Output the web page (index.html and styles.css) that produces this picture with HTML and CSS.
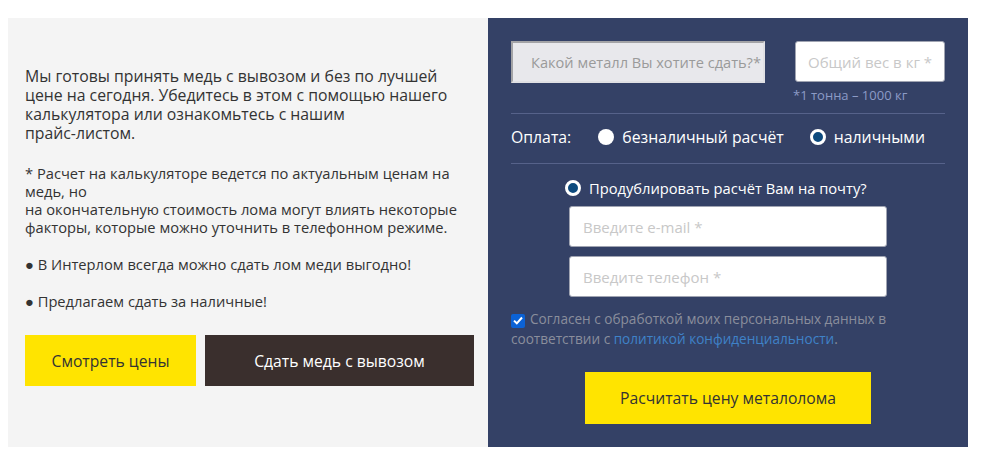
FILE: index.html
```html
<!DOCTYPE html>
<html lang="ru">
<head>
    <meta charset="UTF-8">
    <meta name="viewport" content="width=device-width, initial-scale=1.0">
    <title>Сдать медь</title>
    <link rel="stylesheet" href="styles.css">
</head>
<body>
    <div class="calc-section">
        <div class="info-panel">
            <p class="lead">Мы готовы принять медь с вывозом и без по лучшей<br>цене на сегодня. Убедитесь в этом с помощью нашего<br>калькулятора или ознакомьтесь с нашим<br>прайс-листом.</p>
            <p class="note">* Расчет на калькуляторе ведется по актуальным ценам на<br>медь, но<br>на окончательную стоимость лома могут влиять некоторые<br>факторы, которые можно уточнить в телефонном режиме.</p>
            <p class="bullet">● В Интерлом всегда можно сдать лом меди выгодно!</p>
            <p class="bullet">● Предлагаем сдать за наличные!</p>
            <div class="info-buttons">
                <button class="btn btn-yellow btn-prices">Смотреть цены</button>
                <button class="btn btn-dark btn-order">Сдать медь с вывозом</button>
            </div>
        </div>

        <div class="form-panel">
            <div class="form-top">
                <div class="metal-select">Какой металл Вы хотите сдать?*</div>
                <div class="weight-group">
                    <input type="text" class="weight-input" placeholder="Общий вес в кг *">
                    <div class="weight-hint">*1 тонна – 1000 кг</div>
                </div>
            </div>

            <div class="payment-row">
                <span class="payment-label">Оплата:</span>
                <label class="radio-item"><span class="radio"></span>безналичный расчёт</label>
                <label class="radio-item"><span class="radio checked"></span>наличными</label>
            </div>

            <div class="mail-block">
                <label class="radio-item mail-toggle"><span class="radio checked"></span>Продублировать расчёт Вам на почту?</label>
                <input type="text" class="field" placeholder="Введите e-mail *">
                <input type="text" class="field" placeholder="Введите телефон *">
            </div>

            <div class="agree">
                <span class="checkbox">
                    <svg width="10" height="9" viewBox="0 0 10 9"><path d="M1 4.6 L3.8 7.3 L9 1.5" fill="none" stroke="#fff" stroke-width="2"/></svg>
                </span>Согласен с обработкой моих персональных данных в<br>соответствии с <a href="#">политикой конфиденциальности</a>.
            </div>

            <div class="submit-wrap">
                <button class="btn btn-yellow btn-submit">Расчитать цену металолома</button>
            </div>
        </div>
    </div>
</body>
</html>
```

FILE: styles.css
```css
body {
    margin: 18px 8px;
    font-family: "Open Sans", "Noto Sans", sans-serif;
    color: #333;
    background: #fff;
}
.calc-section {
    display: flex;
    width: 960px;
    height: 429px;
}
.info-panel {
    width: 480px;
    box-sizing: border-box;
    background-color: #f4f4f4;
    padding: 49px 10px 0 17px;
}
.info-panel p {
    margin: 0;
}
.lead {
    font-size: 15.8px;
    line-height: 19px;
}
.note {
    font-size: 14.7px;
    line-height: 18px;
    margin-top: 21px !important;
}
.bullet {
    font-size: 14.7px;
    line-height: 18px;
    margin-top: 19px !important;
}
.info-buttons {
    display: flex;
    gap: 9px;
    margin-top: 25px;
}
.btn {
    border: none;
    font-family: inherit;
    font-size: 15.7px;
    height: 51px;
    cursor: pointer;
}
.btn-yellow {
    background-color: #ffe400;
    color: #333;
}
.btn-dark {
    background-color: #3a2f2d;
    color: #fff;
}
.btn-prices {
    width: 171px;
}
.btn-order {
    width: 269px;
}

.form-panel {
    width: 480px;
    box-sizing: border-box;
    background-color: #344166;
    padding: 23px 23px 0 23px;
    color: #fff;
}
.form-top {
    display: flex;
    justify-content: space-between;
    padding-bottom: 9px;
    border-bottom: 1px solid #56628a;
}
.metal-select {
    width: 254px;
    height: 42px;
    box-sizing: border-box;
    padding-left: 16px;
    background-color: #e8e8ec;
    border: 2px solid #a3a3a6;
    border-right-color: #e0e0e4;
    border-bottom-color: #e0e0e4;
    color: #9a9a9a;
    font-size: 14.6px;
    display: flex;
    align-items: center;
    justify-content: center;
    white-space: nowrap;
}
.weight-group {
    width: 150px;
}
.weight-input, .field {
    display: block;
    box-sizing: border-box;
    background: #fff;
    border: 1px solid #a0a4b2;
    border-radius: 3px;
    font-family: inherit;
    font-size: 15px;
    color: #333;
}
.weight-input {
    width: 150px;
    height: 41px;
    padding: 0 8px;
    text-align: center;
}
::placeholder {
    color: #c8c8c8;
}
.weight-hint {
    font-size: 13px;
    color: #8c9bc6;
    margin: 4px 0 0 -2px;
    line-height: 18px;
}
.payment-row {
    display: flex;
    align-items: center;
    height: 45px;
    padding-bottom: 4px;
    font-size: 15.8px;
    white-space: nowrap;
    border-bottom: 1px solid #56628a;
}
.payment-label {
    margin-right: 27px;
}
.radio-item {
    display: flex;
    align-items: center;
    flex-shrink: 0;
    margin-right: 26px;
    white-space: nowrap;
}
.radio {
    width: 16px;
    height: 16px;
    flex-shrink: 0;
    box-sizing: border-box;
    border-radius: 50%;
    background: #fff;
    margin-right: 8px;
}
.radio.checked {
    border: 3px solid #fff;
    background: #0d4a7e;
}
.mail-block {
    width: 318px;
    margin: 0 auto;
    padding-top: 14px;
}
.mail-toggle {
    margin: 0 0 8px -4px;
    font-size: 14.7px;
    line-height: 20px;
}
.field {
    width: 318px;
    height: 41px;
    padding: 0 13px;
    margin-bottom: 9px;
}
.agree {
    font-size: 13.6px;
    line-height: 20px;
    color: #8a8e9c;
    margin-top: 12px;
}
.agree a {
    color: #3f82c8;
    text-decoration: none;
}
.checkbox {
    display: inline-flex;
    align-items: center;
    justify-content: center;
    width: 14px;
    height: 14px;
    background: #0b62d6;
    border-radius: 2px;
    vertical-align: -1px;
    margin-right: 5px;
}
.submit-wrap {
    text-align: center;
    margin-top: 23px;
}
.btn-submit {
    width: 286px;
    height: 52px;
}
```
